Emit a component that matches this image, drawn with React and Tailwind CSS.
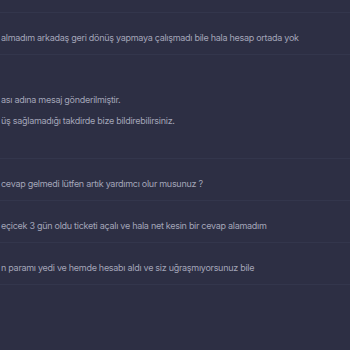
const rows = [
  { h: 'h-[42px]', pt: 'pt-[14px]', lines: ['almadım arkadaş geri dönüş yapmaya çalışmadı bile hala hesap ortada yok'] },
  { h: 'h-[104px]', pt: 'pt-[34px]', lines: ['ası adına mesaj gönderilmiştir.', 'üş sağlamadığı takdirde bize bildirebilirsiniz.'] },
  { h: 'h-[42px]', pt: 'pt-[14px]', lines: ['cevap gelmedi lütfen artık yardımcı olur musunuz ?'] },
  { h: 'h-[42px]', pt: 'pt-[14px]', lines: ['eçicek 3 gün oldu ticketi açalı ve hala net kesin bir cevap alamadım'] },
  { h: 'h-[42px]', pt: 'pt-[14px]', lines: ['n paramı yedi ve hemde hesabı aldı ve siz uğraşmıyorsunuz bile'] },
];

const App = () => {
  return (
    <div
      className="w-[350px] h-[350px] overflow-hidden bg-[#2d2f44] text-[#a3a5b8] text-[9px] tracking-[-0.28px]"
      style={{ fontFamily: 'Inter, "Noto Sans", sans-serif' }}
    >
      <div className="h-[12px]" />
      {rows.map((row, i) => (
        <div key={i} className={`${row.h} ${row.pt} border-t border-[#33364c] pl-[1px] leading-[21px] whitespace-nowrap`}>
          {row.lines.map((line, j) => (
            <div key={j}>{line}</div>
          ))}
        </div>
      ))}
      <div className="border-t border-[#33364c]" />
    </div>
  );
};

export default App;
